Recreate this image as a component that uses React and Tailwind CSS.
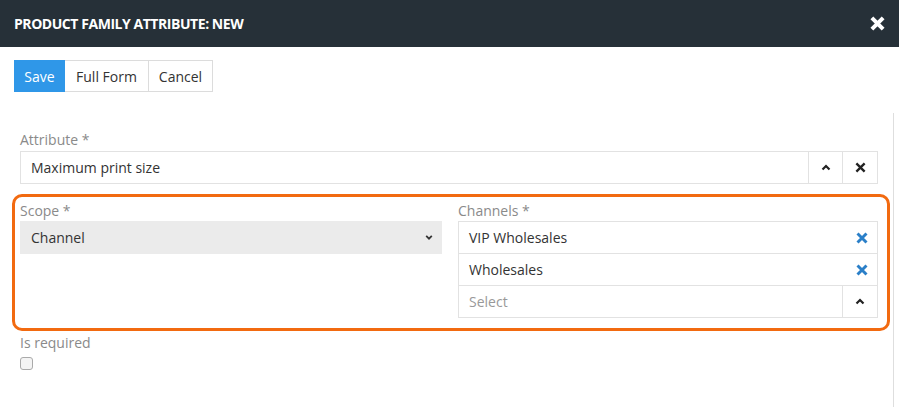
import React from "react";

const XIcon = ({ className = "", size = 12, stroke = 3 }) => (
  <svg width={size} height={size} viewBox="0 0 12 12" className={className}>
    <path d="M1.5 1.5 L10.5 10.5 M10.5 1.5 L1.5 10.5" stroke="currentColor" strokeWidth={stroke} strokeLinecap="butt" fill="none" />
  </svg>
);

const Caret = ({ up = true, className = "" }) => (
  <svg width="10" height="7" viewBox="0 0 10 7" className={className}>
    <path d={up ? "M1.5 5.5 L5 2 L8.5 5.5" : "M1.5 1.5 L5 5 L8.5 1.5"} stroke="currentColor" strokeWidth="2.2" fill="none" />
  </svg>
);

export default function App() {
  const font = { fontFamily: '"Open Sans", "Noto Sans", sans-serif' };
  return (
    <div className="w-[899px] h-[407px] bg-white overflow-hidden text-[14px] text-[#333]" style={font}>
      <div className="h-[47px] bg-[#263038] flex items-center justify-between pl-[14px] pr-[14px]">
        <div className="text-white font-bold text-[14px] tracking-[-0.45px]">PRODUCT FAMILY ATTRIBUTE: NEW</div>
        <XIcon size={15} stroke={3.2} className="text-white" />
      </div>

      <div className="pl-[14px] pt-[13px] flex">
        <button className="h-[32px] w-[51px] bg-[#2f97e8] text-white border border-[#2f97e8] text-[14px]">Save</button>
        <button className="h-[32px] w-[83px] bg-white text-[#333] border-y border-[#dcdcdc] text-[14px]">Full Form</button>
        <button className="h-[32px] w-[65px] bg-white text-[#333] border border-[#dcdcdc] text-[14px]">Cancel</button>
      </div>

      <div className="mt-[21px] w-[894px] h-[300px] border-r border-[#dedede] pl-[20px] pr-[15px] pt-[17px]">
        <div className="text-[#8a8a8a] leading-[20px]">Attribute *</div>
        <div className="mt-[1px] h-[33px] flex border border-[#e2e2e2]">
          <div className="flex-1 flex items-center pl-[10px] text-[#333]">Maximum print size</div>
          <div className="w-[34px] border-l border-[#e2e2e2] flex items-center justify-center text-[#222]"><Caret up /></div>
          <div className="w-[35px] border-l border-[#e2e2e2] flex items-center justify-center text-[#222]"><XIcon size={11} stroke={2.6} /></div>
        </div>

        <div className="mt-[10px] -ml-[8px] -mr-[12px] h-[137px] border-[3px] border-[#f26a10] rounded-[10px] pl-[5px] pr-[9px] pt-[4px] flex gap-[16px]">
          <div className="w-[422px]">
            <div className="text-[#8a8a8a] leading-[20px]">Scope *</div>
            <div className="h-[33px] bg-[#ebebeb] flex items-center justify-between pl-[11px] pr-[9px]">
              <span className="text-[#333]">Channel</span>
              <Caret up={false} className="text-[#333] w-[8px]" />
            </div>
          </div>
          <div className="flex-1">
            <div className="text-[#8a8a8a] leading-[20px]">Channels *</div>
            <div className="border border-[#e2e2e2]">
              <div className="h-[32px] flex items-center justify-between pl-[10px] pr-[9px] border-b border-[#e2e2e2]">
                <span>VIP Wholesales</span>
                <XIcon size={12} stroke={2.9} className="text-[#2a7fc8]" />
              </div>
              <div className="h-[32px] flex items-center justify-between pl-[10px] pr-[9px] border-b border-[#e2e2e2]">
                <span>Wholesales</span>
                <XIcon size={12} stroke={2.9} className="text-[#2a7fc8]" />
              </div>
              <div className="h-[31px] flex">
                <div className="flex-1 flex items-center pl-[10px] text-[#999]">Select</div>
                <div className="w-[35px] border-l border-[#e2e2e2] flex items-center justify-center text-[#222]"><Caret up /></div>
              </div>
            </div>
          </div>
        </div>

        <div className="mt-[2px] text-[#8a8a8a] leading-[20px]">Is required</div>
        <div className="mt-[4px] w-[13px] h-[13px] border border-[#aaa] rounded-[3px] bg-[#f4f4f4]"></div>
      </div>
    </div>
  );
}
